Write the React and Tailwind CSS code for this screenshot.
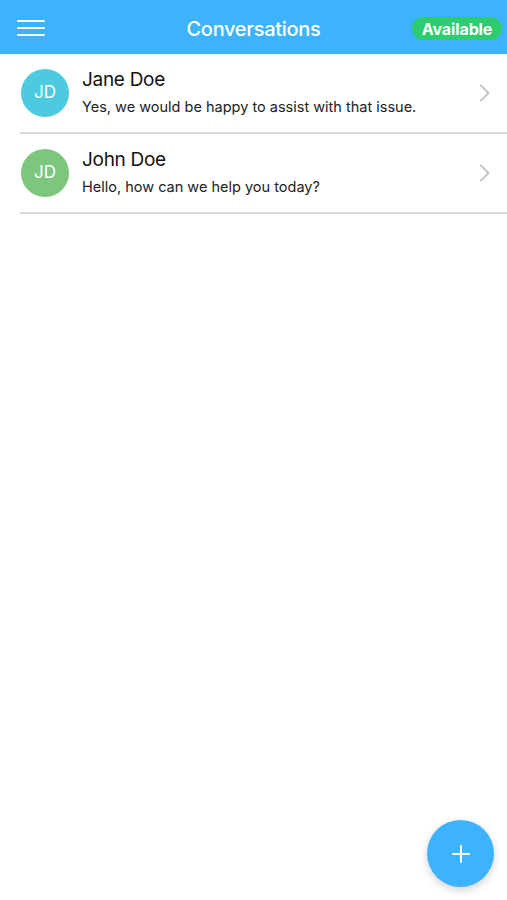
import React from "react";

const rows = [
  { name: "Jane Doe", msg: "Yes, we would be happy to assist with that issue.", color: "bg-[#4ccbe0]" },
  { name: "John Doe", msg: "Hello, how can we help you today?", color: "bg-[#7cc67e]" },
];

export default function App() {
  return (
    <div className="relative w-[507px] h-[900px] bg-white overflow-hidden" style={{ fontFamily: 'Inter, "Liberation Sans", Arial, sans-serif' }}>
      <header className="h-[54px] bg-[#3db2fd] flex items-center justify-between pl-[17px] pr-[5px] relative">
        <div className="flex flex-col gap-[4.5px] w-[28px] mt-[2px]">
          <div className="h-[2.5px] bg-white rounded-full" />
          <div className="h-[2.5px] bg-white rounded-full" />
          <div className="h-[2.5px] bg-white rounded-full" />
        </div>
        <div className="absolute left-0 right-0 top-0 h-[54px] flex items-center justify-center pointer-events-none">
          <span className="text-white text-[20px] font-medium tracking-[-0.3px] mt-[3px]">Conversations</span>
        </div>
        <div className="h-[23px] w-[90px] rounded-full bg-[#2ecc71] flex items-center justify-center mt-[3px]">
          <span className="text-white text-[16px] font-bold tracking-[-0.1px]">Available</span>
        </div>
      </header>
      <div>
        {rows.map((r) => (
          <div key={r.name} className="pl-[20px]">
            <div className="h-[78px] flex items-center">
              <div className={`w-[48px] h-[48px] rounded-full ${r.color} flex items-center justify-center ml-px`}>
                <span className="text-white text-[17px]">JD</span>
              </div>
              <div className="ml-[13px] flex-1 flex flex-col -mt-[2px]">
                <span className="text-[#111] text-[19px] leading-[24px] tracking-[-0.3px]">{r.name}</span>
                <span className="text-[#222] text-[14.5px] leading-[18px] mt-[6px]">{r.msg}</span>
              </div>
              <svg width="12" height="18" viewBox="0 0 12 18" className="mr-[16px]">
                <path d="M2 1.5 L9.5 9 L2 16.5" fill="none" stroke="#c4c4c4" strokeWidth="2" strokeLinecap="round" strokeLinejoin="round" />
              </svg>
            </div>
            <div className="h-[2px] bg-[#dadada]" />
          </div>
        ))}
      </div>
      <button className="absolute left-[427px] top-[820px] w-[67px] h-[67px] rounded-full bg-[#3db2fd] flex items-center justify-center shadow-[0_3px_8px_rgba(0,0,0,0.18)]">
        <svg width="20" height="20" viewBox="0 0 20 20">
          <path d="M10 2 V18 M2 10 H18" stroke="white" strokeWidth="2" strokeLinecap="round" />
        </svg>
      </button>
    </div>
  );
}
